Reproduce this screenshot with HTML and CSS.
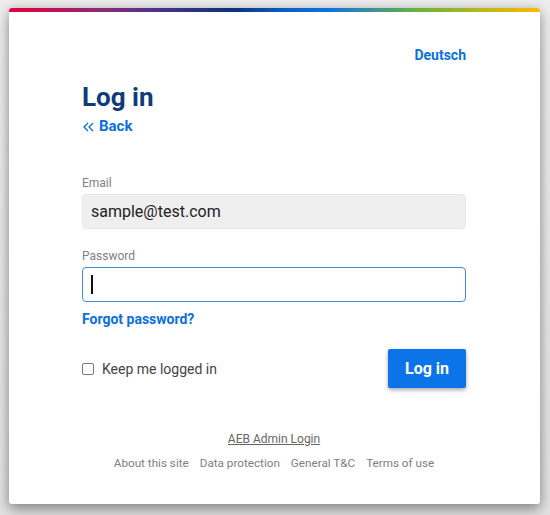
FILE: index.html
```html
<!DOCTYPE html>
<html lang="en">
<head>
<meta charset="utf-8">
<title>Log in</title>
<link rel="stylesheet" href="styles.css">
</head>
<body>
<div class="card">
  <div class="rainbow"></div>
  <div class="content">
    <div class="lang"><a href="#" class="link">Deutsch</a></div>
    <h1 class="title">Log in</h1>
    <a href="#" class="link back"><svg class="chev" width="11" height="10" viewBox="0 0 11 10"><path d="M5 1 L1 5 L5 9 M10 1 L6 5 L10 9" fill="none" stroke="currentColor" stroke-width="1.3"/></svg>Back</a>
    <form class="form">
      <label class="label" for="email">Email</label>
      <input class="input input-filled" id="email" type="text" value="sample@test.com">
      <label class="label label-pw" for="pw">Password</label>
      <div class="input input-focus"><span class="caret"></span></div>
      <a href="#" class="link forgot">Forgot password?</a>
      <div class="row">
        <label class="keep"><span class="checkbox"></span>Keep me logged in</label>
        <button type="button" class="btn">Log in</button>
      </div>
    </form>
    <div class="admin"><a href="#">AEB Admin Login</a></div>
    <div class="footer">
      <a href="#">About this site</a>
      <a href="#">Data protection</a>
      <a href="#">General T&amp;C</a>
      <a href="#">Terms of use</a>
    </div>
  </div>
</div>
</body>
</html>
```
FILE: styles.css
```css
* { box-sizing: border-box; }
html, body { margin: 0; height: 100%; }
body {
  font-family: Roboto, "Liberation Sans", Arial, sans-serif;
  background: linear-gradient(#ededed, #e2e2e2);
  padding: 8px 10px 0 9px;
  overflow: hidden;
}
.card {
  width: 531px;
  height: 496px;
  background: #fff;
  border-radius: 3px;
  box-shadow: 0 6px 14px rgba(0,0,0,0.35), 0 0 10px rgba(0,0,0,0.12);
  overflow: hidden;
}
.rainbow {
  height: 4px;
  background: linear-gradient(90deg, #e8003c 0%, #8a2a7c 18%, #4b3486 28%, #0d3278 42%, #0a5fc8 52%, #0a74e6 60%, #3b8f9a 68%, #6ab33a 77%, #a9b81e 87%, #ffb900 100%);
}
.content {
  width: 384px;
  margin: 0 0 0 73px;
  display: flex;
  flex-direction: column;
}
.link {
  color: #0a6fe0;
  font-weight: 700;
  text-decoration: none;
  font-size: 14px;
  line-height: 16px;
}
.lang { text-align: right; margin-top: 35px; line-height: 16px; }
.title {
  margin: 19px 0 0;
  font-size: 26px;
  line-height: 30px;
  font-weight: 700;
  color: #0f3a7c;
}
.back {
  font-size: 15px;
  line-height: 20px;
  margin-top: 4px;
  align-self: flex-start;
  display: flex;
  align-items: center;
}
.chev { margin: 1px 5px 0 1px; }
.form { display: flex; flex-direction: column; margin-top: 39px; }
.label {
  font-size: 12px;
  line-height: 16px;
  color: #808080;
}
.label-pw { margin-top: 19px; }
.input {
  margin-top: 3px;
  height: 35px;
  border-radius: 4px;
  font-family: inherit;
  font-size: 16px;
  padding: 0 8px;
  color: #222;
}
.input-filled {
  background: #efefef;
  border: 1px solid #e8e8e8;
  outline: none;
}
.input-focus {
  border: 1px solid #3f8ae0;
  display: flex;
  align-items: center;
}
.caret { width: 2px; height: 19px; background: #111; }
.forgot { margin-top: 9px; font-size: 14px; align-self: flex-start; }
.row {
  margin-top: 22px;
  display: flex;
  justify-content: space-between;
  align-items: center;
}
.keep {
  display: flex;
  align-items: center;
  font-size: 14px;
  color: #444;
}
.checkbox {
  width: 12px;
  height: 12px;
  border: 1px solid #777;
  border-radius: 2px;
  margin-right: 8px;
}
.btn {
  width: 78px;
  height: 39px;
  border: none;
  border-radius: 2px;
  background: #0a74e8;
  color: #fff;
  font-family: inherit;
  font-size: 16px;
  font-weight: 700;
  box-shadow: 0 2px 4px rgba(0,0,0,0.35);
}
.admin {
  margin-top: 43px;
  text-align: center;
  font-size: 12px;
  line-height: 16px;
}
.admin a { color: #666; text-decoration: underline; }
.footer {
  margin-top: 8px;
  display: flex;
  justify-content: center;
  gap: 11px;
  font-size: 11.7px;
  line-height: 16px;
}
.footer a { color: #808080; text-decoration: none; }
```
